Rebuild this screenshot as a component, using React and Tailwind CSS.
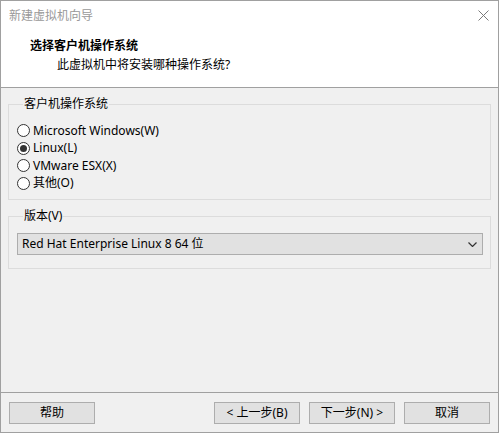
import React from 'react';

const FONT = "font-['Noto_Sans','Noto_Sans_CJK_SC',sans-serif]";

const Radio = ({ label, checked }) => (
  <div className="flex items-center h-[17.5px]">
    <span className="w-[13px] h-[13px] rounded-full border border-[#333] bg-white flex items-center justify-center">
      {checked && <span className="w-[7px] h-[7px] rounded-full bg-[#333]" />}
    </span>
    <span className="ml-[3px] text-[12px] text-black leading-none">{label}</span>
  </div>
);

const Btn = ({ children, className = '' }) => (
  <button className={`h-[22px] w-[86px] border border-[#adadad] bg-[#e1e1e1] text-[12px] text-black leading-none ${className}`}>
    {children}
  </button>
);

const App = () => {
  return (
    <div className={`w-[499px] h-[433px] border border-[#a0a0a0] bg-[#f0f0f0] flex flex-col ${FONT}`}>
      {/* title bar */}
      <div className="h-[30px] bg-white flex items-center justify-between pl-[8px] pr-[9px]">
        <span className="text-[12px] text-[#999]">新建虚拟机向导</span>
        <svg width="11" height="11" viewBox="0 0 11 11" className="mb-[1px]">
          <path d="M0.5 0.5 L10.5 10.5 M10.5 0.5 L0.5 10.5" stroke="#7a7a7a" strokeWidth="1" fill="none" />
        </svg>
      </div>

      {/* header */}
      <div className="h-[57px] bg-white border-b border-[#a0a0a0] pl-[29px] pt-[6px]">
        <div className="text-[12px] font-bold text-black leading-[18px]">选择客户机操作系统</div>
        <div className="text-[12px] text-black leading-[18px] pl-[27px] mt-[1px]">此虚拟机中将安装哪种操作系统?</div>
      </div>

      {/* body */}
      <div className="flex-1 px-[7px] pt-[8px]">
        <fieldset className="border border-[#dcdcdc] h-[104px] pl-[8px] pt-[10px]">
          <legend className="ml-[6px] px-[1px] text-[12px] text-black leading-[16px]">客户机操作系统</legend>
          <Radio label="Microsoft Windows(W)" />
          <Radio label="Linux(L)" checked />
          <Radio label="VMware ESX(X)" />
          <Radio label="其他(O)" />
        </fieldset>

        <fieldset className="border border-[#dcdcdc] h-[61px] mt-[8px] pl-[8px] pr-[7px] pt-[9px]">
          <legend className="ml-[6px] px-[1px] text-[12px] text-black leading-[16px]">版本(V)</legend>
          <div className="h-[22px] border border-[#adadad] bg-[#e1e1e1] flex items-center justify-between pl-[4px] pr-[5px]">
            <span className="text-[12px] text-black">Red Hat Enterprise Linux 8 64 位</span>
            <svg width="9" height="5" viewBox="0 0 9 5">
              <path d="M0.5 0.5 L4.5 4.5 L8.5 0.5" stroke="#333" strokeWidth="1.2" fill="none" />
            </svg>
          </div>
        </fieldset>
      </div>

      {/* footer */}
      <div className="h-[40px] border-t border-[#a0a0a0] flex items-start pt-[9px] pl-[8px] pr-[8px]">
        <Btn>帮助</Btn>
        <div className="flex-1" />
        <Btn>&lt; 上一步(B)</Btn>
        <Btn className="ml-[9px]">下一步(N) &gt;</Btn>
        <Btn className="ml-[9px]">取消</Btn>
      </div>
    </div>
  );
};

export default App;
